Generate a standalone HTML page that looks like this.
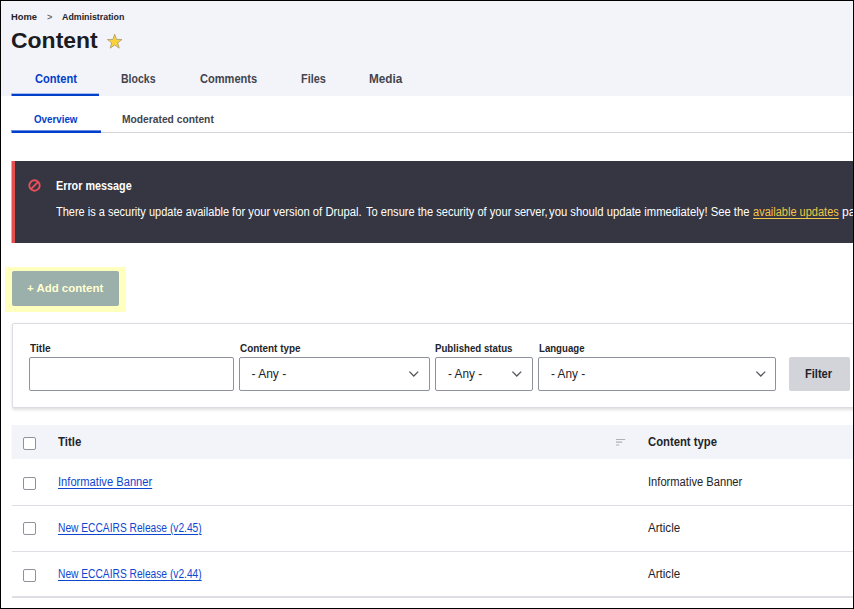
<!DOCTYPE html>
<html><head><meta charset="utf-8">
<style>
*{box-sizing:border-box;margin:0;padding:0}
html,body{width:854px;height:609px;overflow:hidden;background:#fff}
body{font-family:"Liberation Sans",sans-serif;color:#232429;position:relative}
.abs{position:absolute}
.t{position:absolute;white-space:nowrap;line-height:20px;transform-origin:0 0}
.fr{position:absolute;background:#000;z-index:50}
.inp{position:absolute;top:356.5px;height:34px;border:1px solid #8e929c;border-radius:2px;background:#fff}
.cb{position:absolute;width:13px;height:13px;border:1px solid #8e929c;border-radius:2px;background:#fff;left:23px}
.hr{position:absolute;left:12px;width:842px;height:1.5px;background:#dedfe4}
</style></head><body>
<div class="abs" style="left:0;top:0;width:854px;height:96px;background:#f3f4f9"></div>
<svg class="abs" style="left:0;top:0" width="140" height="60" viewBox="0 0 140 60"><path d="M114.70 34.20 L116.51 39.41 L122.02 39.52 L117.63 42.85 L119.23 48.13 L114.70 44.98 L110.17 48.13 L111.77 42.85 L107.38 39.52 L112.89 39.41Z" fill="#fdd13a" stroke="#a59c68" stroke-width="0.8" stroke-linejoin="miter"/></svg>
<div class="abs" style="left:11px;top:94px;width:88px;height:2px;background:linear-gradient(to right,rgba(0,62,204,.5) 1px,#003ecc 1px)"></div><div class="abs" style="left:11px;top:93px;width:88px;height:1px;background:rgba(0,62,204,.3)"></div>
<div class="abs" style="left:12px;top:131.6px;width:842px;height:1.2px;background:#d3d4d9"></div>
<div class="abs" style="left:11px;top:131px;width:90px;height:2px;background:linear-gradient(to right,rgba(0,62,204,.5) 1px,#003ecc 1px)"></div><div class="abs" style="left:11px;top:130px;width:90px;height:1px;background:rgba(0,62,204,.6)"></div>

<div class="abs" style="left:11px;top:161px;width:843px;height:82.4px;background:#353641;border-left:4px solid #e34f4f"></div><div class="abs" style="left:11px;top:161px;width:1px;height:82.4px;background:rgba(255,255,255,.5)"></div>
<svg class="abs" style="left:27.6px;top:178.6px" width="13" height="13" viewBox="0 0 13 13"><circle cx="6.5" cy="6.5" r="5.2" fill="none" stroke="#e8505b" stroke-width="1.9"/><path d="M2.9 10.1L10.1 2.9" stroke="#e8505b" stroke-width="1.9"/></svg>

<div class="abs" style="left:5px;top:267px;width:121px;height:45px;background:#ffffbe"></div>
<div class="abs" style="left:11.5px;top:271px;width:107.5px;height:35px;background:#9bafab;border-radius:2px"></div>

<div class="abs" style="left:12px;top:323px;width:860px;height:85px;border:1px solid #dcdde2;border-radius:2px;box-shadow:0 1.5px 3px rgba(0,0,0,.12);background:#fff"></div>
<div class="inp" style="left:29.3px;width:205px"></div>
<div class="inp" style="left:239px;width:191.3px"></div>
<div class="inp" style="left:435.2px;width:98px"></div>
<div class="inp" style="left:538.2px;width:238.2px"></div>
<svg class="abs" style="left:408px;top:369.5px" width="12" height="8" viewBox="0 0 12 8"><path d="M1.4 1.6L5.8 6l4.4-4.4" fill="none" stroke="#55565b" stroke-width="1.3"/></svg>
<svg class="abs" style="left:511px;top:369.5px" width="12" height="8" viewBox="0 0 12 8"><path d="M1.4 1.6L5.8 6l4.4-4.4" fill="none" stroke="#55565b" stroke-width="1.3"/></svg>
<svg class="abs" style="left:754.7px;top:369.5px" width="12" height="8" viewBox="0 0 12 8"><path d="M1.4 1.6L5.8 6l4.4-4.4" fill="none" stroke="#55565b" stroke-width="1.3"/></svg>
<div class="abs" style="left:788.5px;top:357px;width:61px;height:33.5px;background:#d3d4d9;border-radius:2px"></div>

<div class="abs" style="left:11px;top:425px;width:843px;height:34px;background:linear-gradient(to right,rgba(243,244,249,.5) 1px,#f3f4f9 1px)"></div>
<div class="cb" style="top:436.6px"></div>
<svg class="abs" style="left:616px;top:438px" width="10" height="8" viewBox="0 0 10 8"><path d="M0 1.5h9.2M0 4.2h6.2M0 7h3.2" stroke="#aeb0bd" stroke-width="1.2"/></svg>
<div class="cb" style="top:476.9px"></div>
<div class="hr" style="top:504.6px"></div>
<div class="cb" style="top:522.3px"></div>
<div class="hr" style="top:550.7px"></div>
<div class="cb" style="top:568.7px"></div>
<div class="hr" style="top:596.1px"></div>
<div class="t" style="left:10.82px;top:7.01px;font-size:9.5px;font-weight:bold;color:#232429;transform:scaleX(0.9840)">Home</div>
<div class="t" style="left:46.55px;top:7.01px;font-size:9.5px;font-weight:bold;color:#6a6b72;transform:scaleX(0.9500)">&gt;</div>
<div class="t" style="left:62.30px;top:7.01px;font-size:9.5px;font-weight:bold;color:#232429;transform:scaleX(0.9299)">Administration</div>
<div class="t" style="left:11.28px;top:30.67px;font-size:22.6px;font-weight:bold;color:#1b1b22;transform:scaleX(1.0167)">Content</div>
<div class="t" style="left:34.75px;top:69.07px;font-size:12.5px;font-weight:bold;color:#003ecc;transform:scaleX(0.8883)">Content</div>
<div class="t" style="left:120.66px;top:69.07px;font-size:12.5px;font-weight:bold;color:#43444d;transform:scaleX(0.8425)">Blocks</div>
<div class="t" style="left:200.20px;top:69.07px;font-size:12.5px;font-weight:bold;color:#43444d;transform:scaleX(0.8844)">Comments</div>
<div class="t" style="left:301.13px;top:69.07px;font-size:12.5px;font-weight:bold;color:#43444d;transform:scaleX(0.8704)">Files</div>
<div class="t" style="left:369.46px;top:69.07px;font-size:12.5px;font-weight:bold;color:#43444d;transform:scaleX(0.9400)">Media</div>
<div class="t" style="left:34.30px;top:108.86px;font-size:10.5px;font-weight:bold;color:#003ecc;transform:scaleX(0.9298)">Overview</div>
<div class="t" style="left:122.32px;top:108.86px;font-size:10.5px;font-weight:bold;color:#43444d;transform:scaleX(0.9774)">Moderated content</div>
<div class="t" style="left:55.62px;top:176.04px;font-size:12.3px;font-weight:bold;color:#ffffff;transform:scaleX(0.8788)">Error message</div>
<div class="t" style="left:56.00px;top:202.47px;font-size:12.5px;color:#ffffff;transform:scaleX(0.8801)">There is a security update available</div>
<div class="t" style="left:232.10px;top:202.47px;font-size:12.5px;color:#ffffff;transform:scaleX(0.9021)">for your version of Drupal.</div>
<div class="t" style="left:365.60px;top:202.47px;font-size:12.5px;color:#ffffff;transform:scaleX(0.8863)">To ensure the security of your server,</div>
<div class="t" style="left:549.20px;top:202.47px;font-size:12.5px;color:#ffffff;transform:scaleX(0.9018)">you should update immediately! See the</div>
<div class="t" style="left:753.00px;top:202.47px;font-size:12.5px;color:#f3c548;text-decoration:underline;text-underline-offset:2px;text-decoration-thickness:1px;transform:scaleX(0.8818)">available updates</div>
<div class="t" style="left:841.73px;top:202.47px;font-size:12.5px;color:#ffffff;transform:scaleX(0.9731)">page</div>
<div class="t" style="left:27.00px;top:278.18px;font-size:11.3px;font-weight:bold;color:#ffffd2;transform:scaleX(1.0133)">+ Add content</div>
<div class="t" style="left:30.00px;top:338.06px;font-size:10.8px;font-weight:bold;color:#232429;transform:scaleX(0.9364)">Title</div>
<div class="t" style="left:240.00px;top:338.06px;font-size:10.8px;font-weight:bold;color:#232429;transform:scaleX(0.9167)">Content type</div>
<div class="t" style="left:434.90px;top:338.06px;font-size:10.8px;font-weight:bold;color:#232429;transform:scaleX(0.8965)">Published status</div>
<div class="t" style="left:538.71px;top:338.06px;font-size:10.8px;font-weight:bold;color:#232429;transform:scaleX(0.8920)">Language</div>
<div class="t" style="left:251.50px;top:363.84px;font-size:12px;color:#232429;transform:scaleX(1.0000)">- Any -</div>
<div class="t" style="left:447.70px;top:363.84px;font-size:12px;color:#232429;transform:scaleX(0.9853)">- Any -</div>
<div class="t" style="left:551.20px;top:363.84px;font-size:12px;color:#232429;transform:scaleX(0.9853)">- Any -</div>
<div class="t" style="left:804.91px;top:363.67px;font-size:12.5px;font-weight:bold;color:#232429;transform:scaleX(0.8867)">Filter</div>
<div class="t" style="left:58.30px;top:432.14px;font-size:12.3px;font-weight:bold;color:#232429;transform:scaleX(0.9280)">Title</div>
<div class="t" style="left:648.40px;top:432.14px;font-size:12.3px;font-weight:bold;color:#232429;transform:scaleX(0.9173)">Content type</div>
<div class="t" style="left:58.30px;top:472.44px;font-size:12px;color:#0f46d0;text-decoration:underline;text-underline-offset:1.5px;text-decoration-thickness:1px;transform:scaleX(0.9291)">Informative Banner</div>
<div class="t" style="left:648.37px;top:472.44px;font-size:12px;color:#232429;transform:scaleX(0.9297)">Informative Banner</div>
<div class="t" style="left:58.30px;top:517.84px;font-size:12px;color:#0f46d0;text-decoration:underline;text-underline-offset:1.5px;text-decoration-thickness:1px;transform:scaleX(0.8516)">New ECCAIRS Release (v2.45)</div>
<div class="t" style="left:648.20px;top:517.84px;font-size:12px;color:#232429;transform:scaleX(0.9636)">Article</div>
<div class="t" style="left:58.30px;top:564.24px;font-size:12px;color:#0f46d0;text-decoration:underline;text-underline-offset:1.5px;text-decoration-thickness:1px;transform:scaleX(0.8516)">New ECCAIRS Release (v2.44)</div>
<div class="t" style="left:648.20px;top:564.44px;font-size:12px;color:#232429;transform:scaleX(0.9636)">Article</div>
<div class="fr" style="left:0;top:0;width:854px;height:1px"></div><div class="fr" style="left:0;top:0;width:1.25px;height:609px"></div><div class="fr" style="right:0;top:0;width:1.15px;height:609px"></div><div class="fr" style="left:0;bottom:0;width:854px;height:1.1px"></div>
</body></html>
